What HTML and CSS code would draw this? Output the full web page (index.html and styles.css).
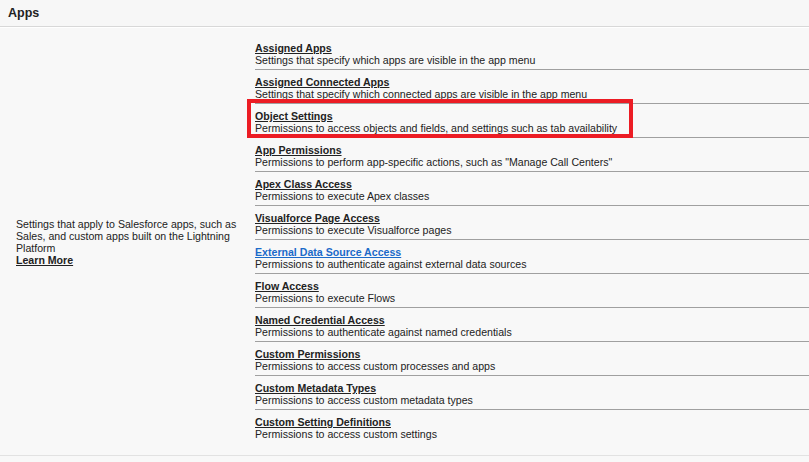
FILE: index.html
```html
<!DOCTYPE html>
<html>
<head>
<meta charset="utf-8">
<link rel="stylesheet" href="styles.css">
</head>
<body>
<div class="header">Apps</div>
<div class="section">
  <div class="intro">
    <p>Settings that apply to Salesforce apps, such as Sales, and custom apps built on the Lightning Platform</p>
    <a class="title" href="#">Learn More</a>
  </div>
  <div class="list">
    <div class="row"><a class="title" href="#">Assigned Apps</a><div class="desc">Settings that specify which apps are visible in the app menu</div></div>
    <div class="row"><a class="title" href="#">Assigned Connected Apps</a><div class="desc">Settings that specify which connected apps are visible in the app menu</div></div>
    <div class="row highlighted"><a class="title" href="#">Object Settings</a><div class="desc">Permissions to access objects and fields, and settings such as tab availability</div><span class="marker"></span></div>
    <div class="row"><a class="title" href="#">App Permissions</a><div class="desc">Permissions to perform app-specific actions, such as "Manage Call Centers"</div></div>
    <div class="row"><a class="title" href="#">Apex Class Access</a><div class="desc">Permissions to execute Apex classes</div></div>
    <div class="row"><a class="title" href="#">Visualforce Page Access</a><div class="desc">Permissions to execute Visualforce pages</div></div>
    <div class="row"><a class="title link" href="#">External Data Source Access</a><div class="desc">Permissions to authenticate against external data sources</div></div>
    <div class="row"><a class="title" href="#">Flow Access</a><div class="desc">Permissions to execute Flows</div></div>
    <div class="row"><a class="title" href="#">Named Credential Access</a><div class="desc">Permissions to authenticate against named credentials</div></div>
    <div class="row"><a class="title" href="#">Custom Permissions</a><div class="desc">Permissions to access custom processes and apps</div></div>
    <div class="row"><a class="title" href="#">Custom Metadata Types</a><div class="desc">Permissions to access custom metadata types</div></div>
    <div class="row last"><a class="title" href="#">Custom Setting Definitions</a><div class="desc">Permissions to access custom settings</div></div>
  </div>
</div>
</body>
</html>
```

FILE: styles.css
```css
html, body {
  margin: 0;
  padding: 0;
  background: #f8f8f8;
}
body {
  font-family: "Liberation Sans", Arial, sans-serif;
  font-size: 10.6px;
  line-height: 12px;
  color: #222;
  width: 809px;
  height: 462px;
  overflow: hidden;
}
.header {
  height: 27px;
  box-sizing: border-box;
  display: flex;
  align-items: center;
  padding-left: 8px;
  font-weight: bold;
  font-size: 12.5px;
  color: #222;
  border-bottom: 1px solid #d8d8d8;
  background: #f7f7f7;
}
.section {
  border-top: 1px solid #ffffff;
  border-bottom: 1px solid #e2e2e2;
  display: grid;
  grid-template-columns: 255px 1fr;
  height: 429px;
  box-sizing: border-box;
}
.intro {
  align-self: center;
  padding: 0 8px 0 16px;
}
.intro p {
  margin: 0;
}
.title {
  display: block;
  font-weight: bold;
  color: #222;
  text-decoration: underline;
  width: max-content;
}
.title.link {
  color: #1b6ac9;
}
.list {
  padding-top: 8px;
}
.row {
  position: relative;
  padding: 6px 0 3px 0;
  border-bottom: 1px solid #a0a0a0;
}
.row.last {
  border-bottom: none;
}
.desc {
  white-space: nowrap;
}
.marker {
  position: absolute;
  left: -8px;
  top: -5px;
  width: 386px;
  height: 39px;
  box-sizing: border-box;
  border: 4px solid #ec1c24;
}
```
